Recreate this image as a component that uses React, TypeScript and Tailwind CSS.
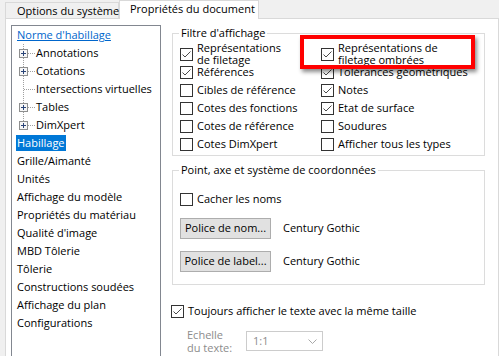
import React from "react";

function Check({ checked }: { checked?: boolean }) {
  return (
    <span className="flex h-[13px] w-[13px] shrink-0 items-center justify-center border border-[#333333] bg-white">
      {checked && (
        <svg width="11" height="11" viewBox="0 0 11 11">
          <polyline points="1.5,5.5 4,8 9.5,2.5" fill="none" stroke="#4a4a4a" strokeWidth="1" />
        </svg>
      )}
    </span>
  );
}

function CheckItem({ checked, children }: { checked?: boolean; children: React.ReactNode }) {
  return (
    <div className="flex h-[18px] items-center gap-[4px]">
      <Check checked={checked} />
      <span className="whitespace-nowrap leading-[12.5px]">{children}</span>
    </div>
  );
}

type Child = { label: string; plus: boolean; last?: boolean };

function TreeChild({ label, plus, last }: Child) {
  return (
    <div className="flex h-[18px] items-center">
      <svg width="23" height="18" viewBox="0 0 23 18" className="shrink-0">
        <line x1="11.5" y1="0" x2="11.5" y2={last ? 9 : 18} stroke="#a0a0a0" strokeDasharray="1 1" />
        <line x1={plus ? 16 : 12} y1="9.5" x2="23" y2="9.5" stroke="#a0a0a0" strokeDasharray="1 1" />
        {plus && (
          <g>
            <rect x="7.5" y="5.5" width="8" height="8" fill="#f6f6f6" stroke="#8e8f8f" />
            <line x1="9" y1="9.5" x2="14" y2="9.5" stroke="#2a4478" />
            <line x1="11.5" y1="7" x2="11.5" y2="12" stroke="#2a4478" />
          </g>
        )}
      </svg>
      <span className="px-[1px] whitespace-nowrap">{label}</span>
    </div>
  );
}

function TreeTop({ label, selected }: { label: string; selected?: boolean }) {
  return (
    <div className="flex h-[18px] items-center pl-[4px]">
      <span
        className={
          selected
            ? "flex h-[16px] items-center bg-[#0078d7] px-[1px] text-white whitespace-nowrap"
            : "px-[1px] whitespace-nowrap"
        }
      >
        {label}
      </span>
    </div>
  );
}

export default function App() {
  const children: Child[] = [
    { label: "Annotations", plus: true },
    { label: "Cotations", plus: true },
    { label: "Intersections virtuelles", plus: false },
    { label: "Tables", plus: true },
    { label: "DimXpert", plus: true, last: true },
  ];
  const tops = [
    "Grille/Aimanté",
    "Unités",
    "Affichage du modèle",
    "Propriétés du matériau",
    "Qualité d'image",
    "MBD Tôlerie",
    "Tôlerie",
    "Constructions soudées",
    "Affichage du plan",
    "Configurations",
  ];
  return (
    <div className="relative flex h-[356px] w-[499px] flex-col overflow-hidden bg-[#f0f0f0] font-['Open_Sans',sans-serif] text-[11px] text-black">
      {/* Tabs */}
      <div className="flex h-[19px] shrink-0 items-end pl-[5px]">
        <div className="flex h-[17px] w-[114px] items-center border border-b-0 border-[#d9d9d9] bg-[#f0f0f0] pl-[11px] whitespace-nowrap">
          Options du système
        </div>
        <div className="relative z-10 flex h-[19px] w-[140px] items-center border border-b-0 border-[#d9d9d9] bg-white pb-[2px] pl-[10px] whitespace-nowrap">
          Propriétés du document
        </div>
      </div>

      {/* Panel */}
      <div className="-mt-px ml-[5px] flex flex-1 border border-[#d9d9d9] bg-white pl-[5px] pt-[6px]">
        {/* Tree */}
        <div className="h-[340px] w-[150px] shrink-0 border border-[#828790]">
          <div className="flex h-[18px] items-center pl-[4px]">
            <span className="px-[1px] text-[#0066cc] underline whitespace-nowrap">Norme d'habillage</span>
          </div>
          {children.map((c) => (
            <TreeChild key={c.label} {...c} />
          ))}
          <TreeTop label="Habillage" selected />
          {tops.map((t) => (
            <TreeTop key={t} label={t} />
          ))}
        </div>

        {/* Right column */}
        <div className="ml-[11px] flex w-[313px] shrink-0 flex-col">
          <fieldset className="mt-[1px] border border-[#dcdcdc] pb-[2px] pl-[7px] pt-[5px]">
            <legend className="-ml-[1px] px-[2px] leading-[14px]">Filtre d'affichage</legend>
            <div className="grid grid-cols-[141px_1fr]">
              <CheckItem checked>
                Représentations
                <br />
                de filetage
              </CheckItem>
              <CheckItem checked>
                Représentations de
                <br />
                filetage ombrées
              </CheckItem>
              <CheckItem checked>Références</CheckItem>
              <CheckItem checked>Tolérances géométriques</CheckItem>
              <CheckItem>Cibles de référence</CheckItem>
              <CheckItem checked>Notes</CheckItem>
              <CheckItem>Cotes des fonctions</CheckItem>
              <CheckItem checked>Etat de surface</CheckItem>
              <CheckItem>Cotes de référence</CheckItem>
              <CheckItem>Soudures</CheckItem>
              <CheckItem>Cotes DimXpert</CheckItem>
              <CheckItem>Afficher tous les types</CheckItem>
            </div>
          </fieldset>

          <fieldset className="mt-[7px] border border-[#dcdcdc] pb-[12px] pl-[7px] pt-[13px]">
            <legend className="-ml-[1px] px-[2px] leading-[14px]">Point, axe et système de coordonnées</legend>
            <CheckItem>Cacher les noms</CheckItem>
            <div className="mt-[10px] flex items-center">
              <button className="flex h-[21px] w-[91px] items-center justify-center border border-[#adadad] bg-[#e1e1e1] whitespace-nowrap">
                Police de nom...
              </button>
              <span className="ml-[12px] whitespace-nowrap">Century Gothic</span>
            </div>
            <div className="mt-[12px] flex items-center">
              <button className="flex h-[21px] w-[91px] items-center justify-center border border-[#adadad] bg-[#e1e1e1] whitespace-nowrap">
                Police de label...
              </button>
              <span className="ml-[12px] whitespace-nowrap">Century Gothic</span>
            </div>
          </fieldset>

          <div className="-ml-px mt-[17px]">
            <CheckItem checked>Toujours afficher le texte avec la même taille</CheckItem>
          </div>

          <div className="mt-[8px] flex items-start pl-[15px]">
            <div className="w-[59px] leading-[13px] text-[#8c8c8c]">
              Echelle
              <br />
              du texte:
            </div>
            <div className="mt-[3px] flex h-[20px] w-[77px] items-center justify-between border border-[#cccccc] bg-white pl-[6px] pr-[5px] text-[#8c8c8c]">
              <span>1:1</span>
              <svg width="9" height="5" viewBox="0 0 9 5">
                <polyline points="0.5,0.5 4.5,4.5 8.5,0.5" fill="none" stroke="#a8a8a8" strokeWidth="1" />
              </svg>
            </div>
          </div>
        </div>
      </div>

      {/* Red highlight annotation */}
      <div className="pointer-events-none absolute left-[300px] top-[35px] h-[34px] w-[175px] border-4 border-[#ff0000] shadow-[2px_3px_4px_rgba(0,0,0,0.45)]" />
    </div>
  );
}
